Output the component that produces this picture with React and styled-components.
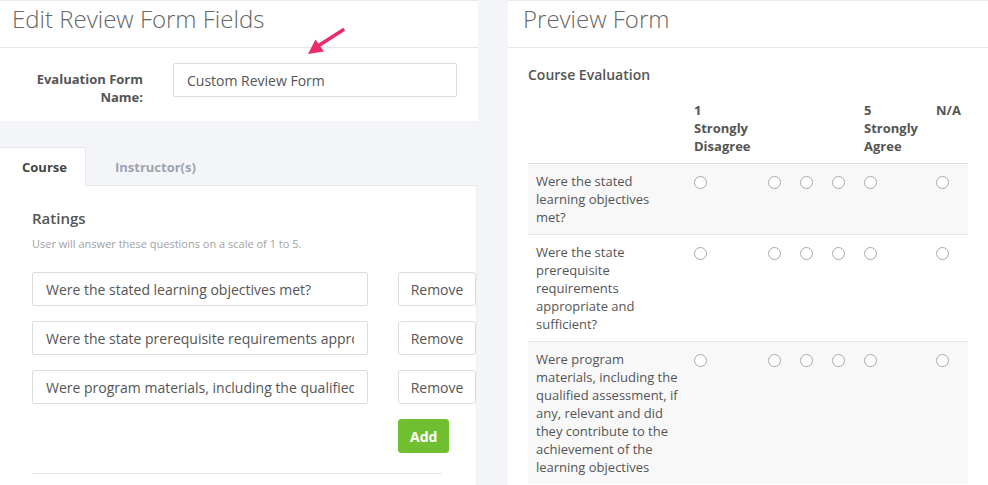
import React from "react";
import styled, { createGlobalStyle } from "styled-components";

const GlobalStyle = createGlobalStyle`
  html, body { margin: 0; padding: 0; background: #f4f5f8; }
  body { font-family: "Open Sans", "Liberation Sans", sans-serif; color: #555; overflow: hidden; }
  * { box-sizing: border-box; }
`;

const Page = styled.div`
  display: grid;
  grid-template-columns: 478px 480px;
  column-gap: 30px;
  align-items: start;
  width: 988px;
`;

const LeftColumn = styled.div`
  display: flex;
  flex-direction: column;
`;

const Card = styled.section`
  position: relative;
  background: #fff;
  border-top: 1px solid #e9e9ec;
`;

const CardHeader = styled.header`
  height: 47px;
  padding: 1px 0 0 ${(p) => p.$indent}px;
  border-bottom: 1px solid #e6e6e9;
`;

const Title = styled.h1`
  margin: 0;
  font-size: 24px;
  line-height: 33px;
  font-weight: 300;
  color: #666;
`;

const FormRow = styled.div`
  display: grid;
  grid-template-columns: 143px 284px;
  column-gap: 30px;
  padding: 15px 0 15px;
`;

const Label = styled.label`
  padding: 7px 0 0 15px;
  text-align: right;
  font-size: 13px;
  line-height: 18px;
  font-weight: 700;
  color: #555;
`;

const TextInput = styled.input`
  height: 34px;
  width: 100%;
  padding: 0 13px;
  border: 1px solid #dcdde0;
  border-radius: 2px;
  font-family: inherit;
  font-size: 14px;
  color: #555;
  background: #fff;
  outline: none;
`;

const Arrow = styled.svg`
  position: absolute;
  left: 300px;
  top: 24px;
  overflow: visible;
`;

const TabBar = styled.div`
  display: flex;
  margin-top: 26px;
  height: 39px;
`;

const Tab = styled.div`
  display: flex;
  align-items: center;
  padding: 0 ${(p) => (p.$active ? 18 : 29)}px 0 ${(p) => (p.$active ? 22 : 29)}px;
  font-size: 13px;
  font-weight: 700;
  color: ${(p) => (p.$active ? "#444" : "#9ea3b0")};
  background: ${(p) => (p.$active ? "#fff" : "transparent")};
  border: 1px solid ${(p) => (p.$active ? "#e6e7ea" : "transparent")};
  border-left: none;
  border-bottom: none;
  border-radius: 0 3px 0 0;
`;

const TabPanel = styled.div`
  background: #fff;
  width: 477px;
  margin-top: -1px;
  border-top: 1px solid #e6e7ea;
  border-right: 1px solid #eceef1;
  padding: 22px 0 12px 32px;
  clip-path: polygon(86px 0, 100% 0, 100% 100%, 0 100%, 0 1px, 86px 1px);
`;

const SectionTitle = styled.h2`
  margin: 0;
  font-size: 15px;
  line-height: 20px;
  font-weight: 600;
  color: #555;
`;

const Help = styled.p`
  margin: 8px 0 20px;
  font-size: 11px;
  line-height: 16px;
  color: #a2a2a2;
`;

const QuestionList = styled.div`
  display: grid;
  grid-template-columns: 336px 78px;
  column-gap: 30px;
  row-gap: 15px;
`;

const Button = styled.button`
  height: 34px;
  padding: 0 ${(p) => (p.$primary ? 11 : 0)}px;
  width: ${(p) => (p.$primary ? "auto" : "78px")};
  justify-self: start;
  font-family: inherit;
  font-size: 14px;
  font-weight: ${(p) => (p.$primary ? 700 : 400)};
  color: ${(p) => (p.$primary ? "#fff" : "#555")};
  background: ${(p) => (p.$primary ? "#70bf30" : "#fff")};
  border: 1px solid ${(p) => (p.$primary ? "#70bf30" : "#dcdde0")};
  border-radius: 3px;
`;

const Divider = styled.hr`
  margin: 20px 0 0;
  width: 410px;
  border: none;
  border-top: 1px solid #e6e7ea;
`;

const RightPanel = styled(Card)`
  min-height: 485px;
`;

const PreviewBody = styled.div`
  padding: 18px 20px 0;
`;

const FormName = styled.h3`
  margin: 0 0 9px;
  font-size: 14px;
  line-height: 18px;
  font-weight: 600;
  color: #555;
`;

const Table = styled.table`
  width: 440px;
  border-collapse: collapse;
  table-layout: fixed;
  font-size: 13px;
  line-height: 18px;
`;

const HeadCell = styled.th`
  padding: 8px;
  text-align: left;
  vertical-align: top;
  font-weight: 700;
  color: #555;
`;

const HeadRow = styled.tr`
  border-bottom: 1px solid #dedfe2;
`;

const BodyRow = styled.tr`
  background: ${(p) => (p.$striped ? "#f8f8f8" : "#fff")};
  border-top: 1px solid #e4e5e8;
`;

const Cell = styled.td`
  padding: 8px;
  vertical-align: top;
  color: #555;
`;

const Radio = styled.input.attrs({ type: "radio" })`
  appearance: none;
  display: block;
  margin: 4px 0 0;
  width: 13px;
  height: 13px;
  border: 1px solid #a9a9a9;
  border-radius: 50%;
  background: #fff;
`;

const questions = [
  "Were the stated learning objectives met?",
  "Were the state prerequisite requirements appropriate and sufficient?",
  "Were program materials, including the qualified assessment, if any, relevant and did they contribute to the achievement of the learning objectives",
];

const colWidths = [158, 74, 32, 32, 32, 72, 40];

export default function App() {
  return (
    <>
      <GlobalStyle />
      <Page>
        <LeftColumn>
          <Card>
            <CardHeader $indent={12}>
              <Title>Edit Review Form Fields</Title>
            </CardHeader>
            <FormRow>
              <Label htmlFor="formName">Evaluation Form Name:</Label>
              <TextInput id="formName" defaultValue="Custom Review Form" />
            </FormRow>
            <Arrow width="50" height="35" viewBox="0 0 50 35">
              <line x1="43" y1="5" x2="18" y2="21" stroke="#ec2b6e" strokeWidth="3.6" strokeLinecap="round" />
              <polygon points="8,29 24,26.5 15.5,14.5" fill="#ec2b6e" />
            </Arrow>
          </Card>
          <TabBar>
            <Tab $active>Course</Tab>
            <Tab>Instructor(s)</Tab>
          </TabBar>
          <TabPanel>
            <SectionTitle>Ratings</SectionTitle>
            <Help>User will answer these questions on a scale of 1 to 5.</Help>
            <QuestionList>
              {questions.map((q) => (
                <React.Fragment key={q}>
                  <TextInput defaultValue={q} />
                  <Button>Remove</Button>
                </React.Fragment>
              ))}
              <span />
              <Button $primary>Add</Button>
            </QuestionList>
            <Divider />
          </TabPanel>
        </LeftColumn>

        <RightPanel>
          <CardHeader $indent={15}>
            <Title>Preview Form</Title>
          </CardHeader>
          <PreviewBody>
            <FormName>Course Evaluation</FormName>
            <Table>
              <colgroup>
                {colWidths.map((w, i) => (
                  <col key={i} style={{ width: w }} />
                ))}
              </colgroup>
              <thead>
                <HeadRow>
                  <HeadCell />
                  <HeadCell>
                    1<br />Strongly<br />Disagree
                  </HeadCell>
                  <HeadCell />
                  <HeadCell />
                  <HeadCell />
                  <HeadCell>
                    5<br />Strongly<br />Agree
                  </HeadCell>
                  <HeadCell>N/A</HeadCell>
                </HeadRow>
              </thead>
              <tbody>
                {questions.map((q, i) => (
                  <BodyRow key={q} $striped={i % 2 === 0}>
                    <Cell>{q}</Cell>
                    {[1, 2, 3, 4, 5, 0].map((v) => (
                      <Cell key={v}>
                        <Radio name={`q${i}`} value={v} />
                      </Cell>
                    ))}
                  </BodyRow>
                ))}
              </tbody>
            </Table>
          </PreviewBody>
        </RightPanel>
      </Page>
    </>
  );
}
